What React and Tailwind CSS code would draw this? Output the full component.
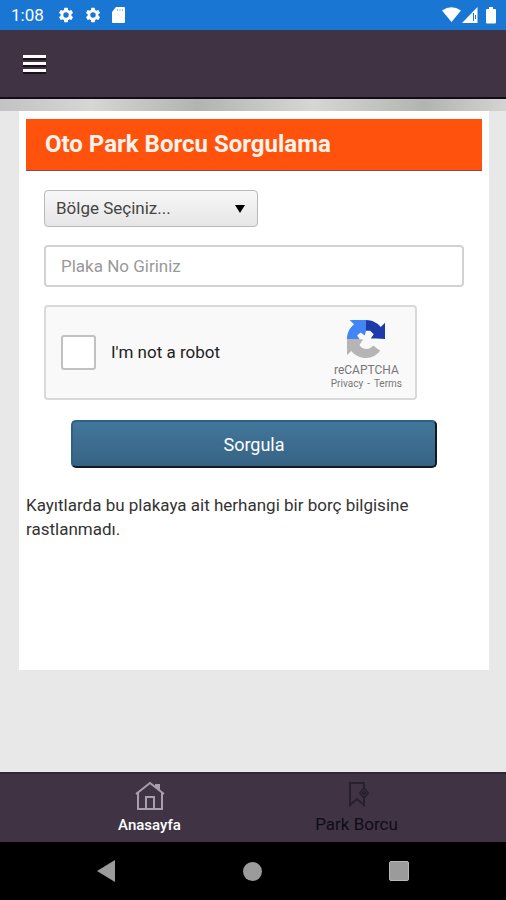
import React from "react";

function Gear() {
  return (
    <svg className="h-[18px] w-[18px]" viewBox="0 0 24 24" fill="currentColor" aria-hidden="true">
      <path d="M19.14 12.94c.04-.3.06-.61.06-.94 0-.32-.02-.64-.07-.94l2.03-1.58a.49.49 0 0 0 .12-.61l-1.92-3.32a.49.49 0 0 0-.59-.22l-2.39.96a7 7 0 0 0-1.62-.94l-.36-2.54a.48.48 0 0 0-.48-.41h-3.84a.47.47 0 0 0-.47.41l-.36 2.54c-.59.24-1.13.57-1.62.94l-2.39-.96a.48.48 0 0 0-.59.22L2.74 8.87a.48.48 0 0 0 .12.61l2.03 1.58a7.500 7.500 0 0 0 0 1.880l-2.030 1.580a.49.49 0 0 0-.12.61l1.920 3.320c.12.22.37.29.59.22l2.390-.96c.5.38 1.030.7 1.620.94l.36 2.540c.05.24.24.41.48.41h3.840c.24 0 .44-.17.47-.41l.36-2.540a7 7 0 0 0 1.620-.94l2.390.96c.22.08.47 0 .59-.22l1.920-3.320a.47.47 0 0 0-.12-.61zM12 15.600a3.600 3.600 0 1 1 0-7.200 3.600 3.600 0 0 1 0 7.200z" />
    </svg>
  );
}

function StatusBar() {
  return (
    <div className="flex h-[30px] items-center bg-[#1976d2] pr-2 pl-[11px] text-white">
      <span className="w-[46px] text-[17px] leading-5">1:08</span>
      <div className="flex flex-1 items-center gap-[9px]">
        <Gear />
        <Gear />
        <svg className="h-4 w-[15px]" viewBox="0 0 15 16" aria-hidden="true">
          <path fill="currentColor" d="M5 0h8q1 0 1 1v14q0 1-1 1H2q-1 0-1-1V5z" />
          <path stroke="#8fbbe9" strokeWidth="1" d="M6.500 2v2M9 2v2M11.500 2v2" />
        </svg>
      </div>
      <svg className="h-[18px] w-[56px]" viewBox="0 0 56 18" aria-hidden="true">
        <path fill="currentColor" d="M0 4.500Q9.500-2 19 4.500L9.500 16zM20 17L35.500 1v16z" />
        <path fill="#1976d2" d="M31 7h1v8h-1zM33 9h1v4h-1z" />
        <path fill="currentColor" d="M47 1h4v2h2q1 0 1 1v12q0 1.500-1 1.500h-8q-1 0-1-1V4q0-1 1-1h2z" />
      </svg>
    </div>
  );
}

function RecaptchaLogo() {
  return (
    <svg className="h-[38px] w-[38px]" viewBox="0 0 64 64" aria-hidden="true">
      <path fill="#1c3aa9" d="M32 0c10 0 19 4.600 24.800 11.800L64 4.700V32H32z" />
      <path fill="#4285f4" d="M4.600 0H32v32H0C0 22 4.600 13.100 11.800 7.300z" />
      <path fill="#b5b5b5" d="M0 32h32l13 10 11 9.500C50.500 59.200 42.400 64 32 64c-10 0-18.900-4.600-24.800-11.800L0 59.400z" />
      <path fill="#f9f9f9" d="M17 26l6-5 7 5 2-8h7l6 6-5 7h9l15 1v15l-9 4-11-8c-3 4-7 6-12 6-5-1-9-3-11-7l6-9-6-1z" />
    </svg>
  );
}

function QueryForm() {
  return (
    <form className="px-[18px] pt-[19px]" onSubmit={(event) => event.preventDefault()}>
      <div className="relative mb-[18px] h-[37px] w-[214px]">
        <select
          aria-label="Bölge"
          className="h-full w-full appearance-none rounded-[4px] border border-[#b9b9b9] bg-linear-to-b from-[#f7f7f7] to-[#e6e6e6] pr-8 pl-[11px] text-[17px] text-[#444]"
        >
          <option>Bölge Seçiniz...</option>
        </select>
        <svg className="pointer-events-none absolute top-[15px] right-[13px] h-2 w-[10px]" viewBox="0 0 10 8" aria-hidden="true">
          <path d="M0 0h10L5 8z" />
        </svg>
      </div>
      <input
        type="text"
        aria-label="Plaka No"
        placeholder="Plaka No Giriniz"
        className="block h-[42px] w-full rounded-[4px] border-2 border-[#d2d2d2] bg-white px-[15px] text-[17px] text-[#444] placeholder:text-[#999]"
      />
      <div className="mt-[18px] flex h-[95px] max-w-[373px] items-center rounded-[4px] border-2 border-[#d9d9d9] bg-[#f9f9f9] pr-[13px] pl-[15px]">
        <input
          id="robot"
          type="checkbox"
          className="h-[35px] w-[35px] appearance-none rounded-[3px] border-2 border-[#c1c1c1] bg-white"
        />
        <label htmlFor="robot" className="flex-1 pl-[15px] text-[17px] text-[#222]">
          I'm not a robot
        </label>
        <div className="flex flex-col items-center pt-[4px] text-[#777]">
          <RecaptchaLogo />
          <span className="mt-[4px] text-[12px] leading-4">reCAPTCHA</span>
          <span className="text-[10px] leading-3">
            <a href="#privacy">Privacy</a>
            <span className="px-1">-</span>
            <a href="#terms">Terms</a>
          </span>
        </div>
      </div>
      <button
        type="submit"
        className="mx-[27px] mt-5 block h-12 w-[calc(100%-54px)] rounded-[5px] border-2 border-t-[#2c6384] border-r-[#111b22] border-b-[#111b22] border-l-[#2c6384] bg-linear-to-b from-[#42779b] to-[#366384] text-[18px] text-white"
      >
        Sorgula
      </button>
    </form>
  );
}

function TabBar() {
  return (
    <nav className="flex h-[70px] border-t-2 border-[#302638] bg-[#3f3344] px-[46px] leading-5">
      <a href="#home" className="flex flex-1 flex-col items-center pt-[7px] text-[15px] font-medium text-white">
        <svg className="mb-[4px] h-[30px] w-[30px] text-[#a79fac]" viewBox="0 0 30 30" fill="none" stroke="currentColor" strokeWidth="2" aria-hidden="true">
          <path d="M1 13L15 2l14 11M3 11v17h24V11M11 28V16h8v12" />
          <path fill="currentColor" d="M21 6V4h3v4z" />
        </svg>
        Anasayfa
      </a>
      <a href="#park" className="flex flex-1 flex-col items-center pt-[7px] text-[17px] text-[#100b16]">
        <svg className="mb-[3px] h-[30px] w-[30px] text-[#28202f]" viewBox="0 0 30 30" fill="none" stroke="currentColor" strokeWidth="2" aria-hidden="true">
          <path d="M22 8V2H8v22l7-6 7 6v-7" />
          <path d="M22 7l4 5-4 5-4-5zM20 12h4M22 10v4" />
        </svg>
        Park Borcu
      </a>
    </nav>
  );
}

function SystemBar() {
  return (
    <div className="flex h-[58px] items-center justify-around bg-black px-[34px] text-[#9b9b9b]">
      <button aria-label="Geri" className="w-5">
        <svg className="h-[22px] w-[19px]" viewBox="0 0 19 22" fill="currentColor"><path d="M0 11L18 0v22z" /></svg>
      </button>
      <button aria-label="Ana ekran" className="h-[19px] w-[19px] rounded-full bg-[#9b9b9b]" />
      <button aria-label="Son uygulamalar" className="h-5 w-5 rounded-[2px] border border-[#b8b8b8] bg-[#9b9b9b]" />
    </div>
  );
}

export default function App() {
  return (
    <div className="flex min-h-screen flex-col bg-[#e8e8e8] font-[Roboto,sans-serif] text-[#333]">
      <StatusBar />
      <header className="flex h-[69px] items-center border-b-2 border-[#120b18] bg-[#3f3344] px-[23px]">
        <button aria-label="Menü" className="flex flex-col gap-1">
          <span className="h-[3px] w-[23px] bg-white shadow-[0_2px_0_#1a1022]" />
          <span className="h-[3px] w-[23px] bg-white shadow-[0_2px_0_#1a1022]" />
          <span className="h-[3px] w-[23px] bg-white shadow-[0_2px_0_#1a1022]" />
        </button>
      </header>
      <div className="h-3 bg-[linear-gradient(90deg,#c2c2c2_0%,#d6d6d5_18%,#b2b4b0_39%,#d6d7d4_62%,#b2b4b0_84%,#d4d4d3_100%)]" />
      <main className="flex-1">
        <section className="mr-[17px] ml-[19px] min-h-[559px] bg-white px-[7px] pt-2">
          <h1 className="h-[52px] border-b border-[#8b4560] bg-[#ff530d] px-[19px] text-[24px] leading-[51px] font-bold text-[#fff3ec]">
            Oto Park Borcu Sorgulama
          </h1>
          <QueryForm />
          <p className="mt-[25px] text-[17px] leading-6">
            Kayıtlarda bu plakaya ait herhangi bir borç bilgisine rastlanmadı.
          </p>
        </section>
      </main>
      <TabBar />
      <SystemBar />
    </div>
  );
}
